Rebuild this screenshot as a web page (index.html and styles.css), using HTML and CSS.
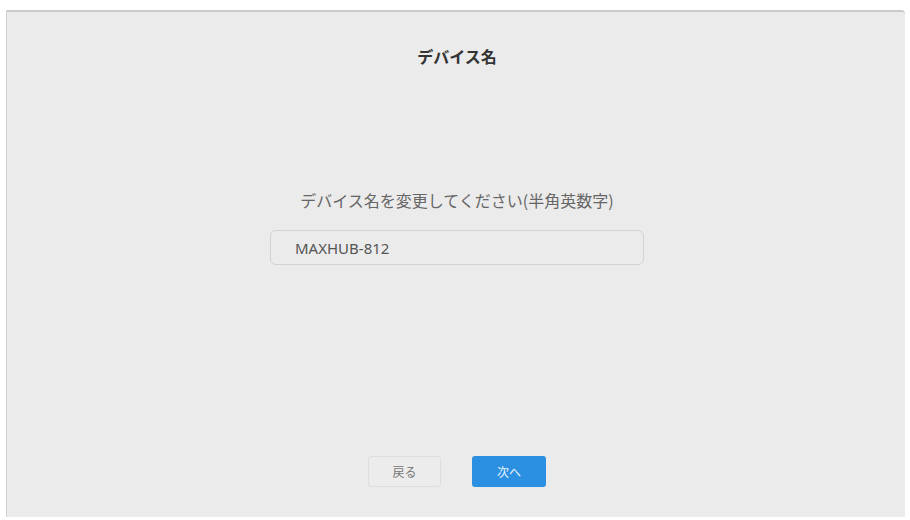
FILE: index.html
```html
<!DOCTYPE html>
<html lang="ja">

<head>
    <meta charset="UTF-8" />
    <meta name="viewport" content="width=device-width, initial-scale=1" />
    <title>デバイス名</title>
    <link rel="stylesheet" href="styles.css">
</head>

<body>
    <div class="panel">
        <h1 class="titulo">デバイス名</h1>

        <div class="contenido">
            <p class="etiqueta">デバイス名を変更してください(半角英数字)</p>
            <input type="text" class="entrada" value="MAXHUB-812">
        </div>

        <div class="botones">
            <button class="boton boton-volver">戻る</button>
            <button class="boton boton-siguiente">次へ</button>
        </div>
    </div>
</body>

</html>
```

FILE: styles.css
```css
body {
    margin: 0;
    background-color: white;
    font-family: "Noto Sans CJK JP", "Noto Sans", sans-serif;
}

.panel {
    margin: 10px 5px 3px 6px;
    padding-left: 2px;
    height: 505px;
    background-color: #ebebeb;
    border-top: 2px solid #cacaca;
    border-left: 1px solid #d2d2d2;
    border-top-right-radius: 4px;
    display: flex;
    flex-direction: column;
    align-items: center;
}

.titulo {
    margin: 33px 0 0;
    font-size: 16px;
    line-height: 22px;
    font-weight: bold;
    color: #333;
}

.contenido {
    margin-top: 121px;
    display: flex;
    flex-direction: column;
    align-items: center;
}

.etiqueta {
    margin: 0 0 18px;
    font-size: 16px;
    line-height: 24px;
    color: #666;
}

.entrada {
    width: 374px;
    height: 35px;
    box-sizing: border-box;
    padding: 0 24px;
    border: 1px solid #d2d2d2;
    border-radius: 6px;
    background-color: #ebebeb;
    font-family: "Noto Sans", sans-serif;
    font-size: 15px;
    color: #555;
    outline: none;
}

.botones {
    margin-top: 191px;
    display: flex;
    gap: 31px;
}

.boton {
    width: 73px;
    height: 31px;
    border-radius: 3px;
    font-family: "Noto Sans CJK JP", sans-serif;
    font-size: 12px;
    cursor: pointer;
}

.boton-volver {
    background-color: #ececec;
    border: 1px solid #dedede;
    color: #777;
}

.boton-siguiente {
    width: 74px;
    background-color: #2b8fe2;
    border: none;
    color: #e8f3fc;
}
```
